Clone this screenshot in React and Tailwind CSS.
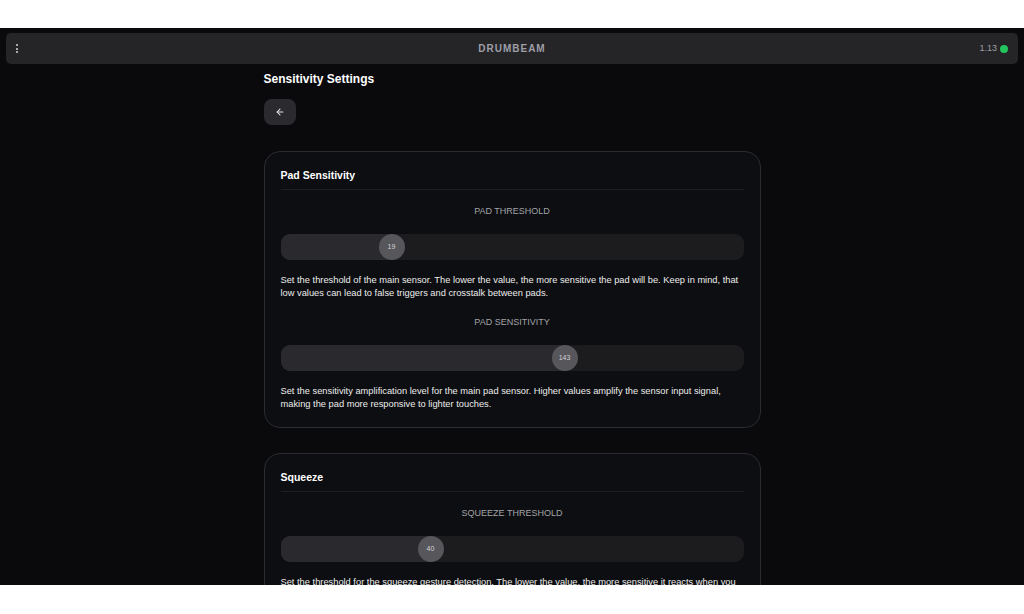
import React from "react";

const font = { fontFamily: '"Liberation Sans", Arial, sans-serif' };

function Slider({ label, value, frac, first }) {
  const left = Math.round(frac * 437);
  return (
    <div className={first ? "pt-[15px]" : "pt-[16px]"}>
      <div className="text-center text-[9px] leading-[12px] text-[#a3a3a8]">{label}</div>
      <div className="relative mt-[17px] h-[26px] rounded-[9px] bg-[#1c1c1f] overflow-hidden">
        <div className="absolute left-0 top-0 h-full bg-[#2a2a2e]" style={{ width: left + 13 }} />
        <div
          className="absolute top-0 flex h-[26px] w-[26px] items-center justify-center rounded-full bg-[#56565b] text-[7px] text-[#d4d4d8]"
          style={{ left }}
        >
          {value}
        </div>
      </div>
    </div>
  );
}

function Desc({ children }) {
  return <p className="mt-[14px] text-[9.3px] leading-[13px] text-[#ececec]">{children}</p>;
}

function Card({ title, children }) {
  return (
    <div className="rounded-[16px] border border-[#2b2c31] bg-[#0d0e11] px-[16px] pt-[16px] pb-[16px]">
      <div className="border-b border-[#1d1e22] pb-[7px] text-[10.5px] font-bold leading-[14px] text-white">
        {title}
      </div>
      {children}
    </div>
  );
}

export default function App() {
  return (
    <div className="h-[614px] w-[1024px] overflow-hidden bg-white" style={font}>
      <div className="mt-[28px] h-[557px] overflow-hidden bg-[#0a0a0c] pt-[5px]">
        <div className="mx-[6px] flex h-[31px] items-center justify-between rounded-[5px] bg-[#252528] px-[9px]">
          <div className="flex w-[60px] flex-col items-start gap-[1.5px] pl-[0.5px]">
            <span className="h-[2px] w-[2px] rounded-full bg-[#d4d4d8]" />
            <span className="h-[2px] w-[2px] rounded-full bg-[#d4d4d8]" />
            <span className="h-[2px] w-[2px] rounded-full bg-[#d4d4d8]" />
          </div>
          <div className="text-[10px] font-bold tracking-[1px] text-[#9d9ea6]">DRUMBEAM</div>
          <div className="flex w-[60px] items-center justify-end gap-[3px] pr-[1px]">
            <span className="text-[9px] text-[#9d9ea6]">1.13</span>
            <span className="h-[8px] w-[8px] rounded-full bg-[#22c55e]" />
          </div>
        </div>

        <div className="mx-auto w-[497px]">
          <h1 className="mt-[8px] text-[12px] font-bold leading-[14px] text-white">Sensitivity Settings</h1>
          <button className="mt-[13px] flex h-[26px] w-[32px] items-center justify-center rounded-[8px] bg-[#2b2b2f] text-[#e5e5e5]">
            <svg width="10" height="10" viewBox="0 0 24 24" fill="none" stroke="currentColor" strokeWidth="2.5" strokeLinecap="round" strokeLinejoin="round">
              <path d="M19 12H5" />
              <path d="M12 19l-7-7 7-7" />
            </svg>
          </button>

          <div className="mt-[26px] flex flex-col gap-[25px]">
            <Card title="Pad Sensitivity">
              <Slider label="PAD THRESHOLD" value="19" frac={0.2243} first />
              <Desc>
                Set the threshold of the main sensor. The lower the value, the more sensitive the pad will be. Keep in mind, that low values can lead to false triggers and crosstalk between pads.
              </Desc>
              <Slider label="PAD SENSITIVITY" value="143" frac={0.62} />
              <Desc>
                Set the sensitivity amplification level for the main pad sensor. Higher values amplify the sensor input signal, making the pad more responsive to lighter touches.
              </Desc>
            </Card>
            <Card title="Squeeze">
              <Slider label="SQUEEZE THRESHOLD" value="40" frac={0.3135} first />
              <Desc>
                Set the threshold for the squeeze gesture detection. The lower the value, the more sensitive it reacts when you squeeze the pad. Higher values require a firmer squeeze to trigger.
              </Desc>
            </Card>
          </div>
        </div>
      </div>
    </div>
  );
}
